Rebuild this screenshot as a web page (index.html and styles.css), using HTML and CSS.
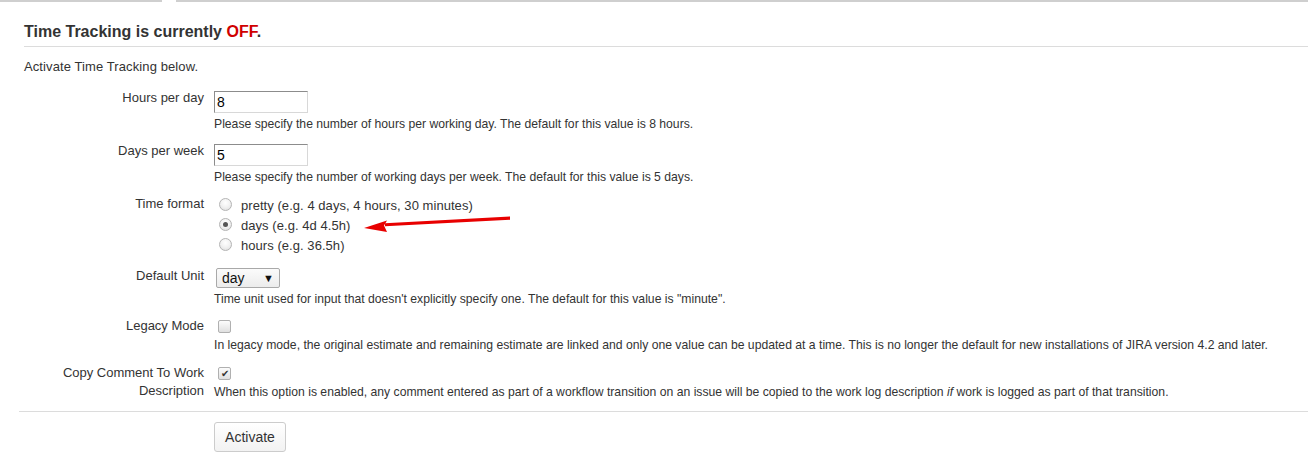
FILE: index.html
```html
<!DOCTYPE html>
<html>
<head>
<meta charset="utf-8">
<link rel="stylesheet" href="styles.css">
</head>
<body>
<div class="topbar"><div class="seg seg-left"></div><div class="seg-gap"></div><div class="seg seg-right"></div></div>
<div class="page">
  <h2 class="title">Time Tracking is currently <span class="off">OFF</span>.</h2>
  <p class="intro">Activate Time Tracking below.</p>
  <form class="form">
    <div class="row">
      <label class="lbl">Hours per day</label>
      <div class="field">
        <div class="text-input">8</div>
        <div class="desc desc-gap">Please specify the number of hours per working day. The default for this value is 8 hours.</div>
      </div>
    </div>
    <div class="row">
      <label class="lbl">Days per week</label>
      <div class="field">
        <div class="text-input">5</div>
        <div class="desc desc-gap">Please specify the number of working days per week. The default for this value is 5 days.</div>
      </div>
    </div>
    <div class="row row-radios">
      <label class="lbl">Time format</label>
      <div class="field">
        <div class="radio-line"><span class="radio"></span><span>pretty (e.g. 4 days, 4 hours, 30 minutes)</span></div>
        <div class="radio-line"><span class="radio checked"></span><span>days (e.g. 4d 4.5h)</span></div>
        <div class="radio-line"><span class="radio"></span><span>hours (e.g. 36.5h)</span></div>
      </div>
    </div>
    <div class="row row-unit">
      <label class="lbl">Default Unit</label>
      <div class="field">
        <div class="select"><span>day</span><span class="caret">&#9660;</span></div>
        <div class="desc desc-gap">Time unit used for input that doesn't explicitly specify one. The default for this value is "minute".</div>
      </div>
    </div>
    <div class="row row-legacy">
      <label class="lbl">Legacy Mode</label>
      <div class="field">
        <div class="check-line"><span class="checkbox"></span></div>
        <div class="desc">In legacy mode, the original estimate and remaining estimate are linked and only one value can be updated at a time. This is no longer the default for new installations of JIRA version 4.2 and later.</div>
      </div>
    </div>
    <div class="row">
      <label class="lbl">Copy Comment To Work Description</label>
      <div class="field">
        <div class="check-line"><span class="checkbox checked">&#10004;</span></div>
        <div class="desc">When this option is enabled, any comment entered as part of a workflow transition on an issue will be copied to the work log description <i>if</i> work is logged as part of that transition.</div>
      </div>
    </div>
    <div class="buttons">
      <button type="button" class="btn">Activate</button>
    </div>
  </form>
</div>
<svg class="annot" width="160" height="24" viewBox="0 0 160 24">
  <polygon points="147,3.5 147,6.8 22,13.2 22,10.2" fill="#e80000"/>
  <polygon points="1,15 24,7.5 21,12.5 24,19" fill="#e80000"/>
</svg>
</body>
</html>
```

FILE: styles.css
```css
html, body {
  margin: 0;
  padding: 0;
  background: #fff;
}
body {
  font-family: "Liberation Sans", Arial, sans-serif;
  color: #333;
  font-size: 13px;
  position: relative;
  width: 1308px;
  height: 460px;
  overflow: hidden;
}
.topbar {
  display: flex;
  height: 2px;
}
.seg {
  background: #cfcfcf;
  height: 2px;
}
.seg-left { width: 162px; }
.seg-gap { width: 14px; }
.seg-right { flex: 1; }

.page {
  padding-left: 24px;
}
.title {
  margin: 20px 0 0 0;
  font-size: 16px;
  line-height: 20px;
  font-weight: bold;
  color: #333;
  padding-bottom: 4px;
  border-bottom: 1px solid #dcdcdc;
}
.off { color: #d00000; }
.intro {
  margin: 12px 0 0 0;
  line-height: 16px;
  letter-spacing: 0.1px;
}
.form {
  margin: 14px 0 0 0;
}
.row {
  display: grid;
  grid-template-columns: 180px 1fr;
  column-gap: 10px;
  margin-bottom: 10px;
}
.row-radios { margin-bottom: 12px; }
.row-legacy { margin-bottom: 11px; }
.lbl {
  text-align: right;
  line-height: 18px;
  padding-left: 30px;
}
.field {
  min-width: 0;
}
.text-input {
  margin-top: 2px;
  height: 20px;
  box-sizing: content-box;
  border: 1px solid;
  border-color: #8c8c8c #d8d8d8 #d8d8d8 #8c8c8c;
  font-size: 14px;
  line-height: 21px;
  padding-left: 2px;
  width: 90px;
  color: #000;
}
.desc {
  font-size: 12.2px;
  line-height: 16px;
  color: #333;
}
.desc-gap { margin-top: 3px; }
.radio-line {
  display: flex;
  align-items: center;
  height: 20px;
  gap: 9px;
  padding-left: 5px;
  letter-spacing: 0.05px;
}
.radio {
  width: 11px;
  height: 11px;
  border-radius: 50%;
  border: 1px solid #b4b4b4;
  background: radial-gradient(circle at 50% 35%, #ffffff 0%, #f1f1f1 50%, #dadada 100%);
  position: relative;
  margin-top: -2px;
}
.radio.checked::after {
  content: "";
  position: absolute;
  left: 3px;
  top: 3px;
  width: 5px;
  height: 5px;
  border-radius: 50%;
  background: #555;
}
.select {
  margin: 1px 0 0 2px;
  height: 18px;
  border: 1px solid #a9a9a9;
  border-radius: 2px;
  background: linear-gradient(#fbfbfb, #ececec);
  display: flex;
  justify-content: space-between;
  align-items: center;
  padding: 0 5px 0 5px;
  box-sizing: content-box;
  width: 52px;
  font-size: 14px;
  color: #111;
}
.caret {
  font-size: 11px;
  color: #111;
}
.check-line {
  height: 20px;
  display: flex;
  align-items: center;
  padding-left: 4px;
}
.checkbox {
  width: 11px;
  height: 11px;
  border: 1px solid #b0b0b0;
  border-radius: 2px;
  background: linear-gradient(#fcfcfc, #e0e0e0);
  display: flex;
  align-items: center;
  justify-content: center;
  font-size: 10px;
  line-height: 11px;
  color: #333;
  margin-top: -2px;
}
.buttons {
  border-top: 1px solid #dcdcdc;
  margin-left: -5px;
  margin-top: 11px;
  padding: 10px 0 0 195px;
}
.btn {
  width: 72px;
  height: 30px;
  border: 1px solid #cccccc;
  border-radius: 3px;
  background: linear-gradient(#ffffff, #f2f2f2);
  font-family: "Liberation Sans", Arial, sans-serif;
  font-size: 14px;
  color: #333;
  padding: 0;
}
.annot {
  position: absolute;
  left: 363px;
  top: 213px;
}
```
